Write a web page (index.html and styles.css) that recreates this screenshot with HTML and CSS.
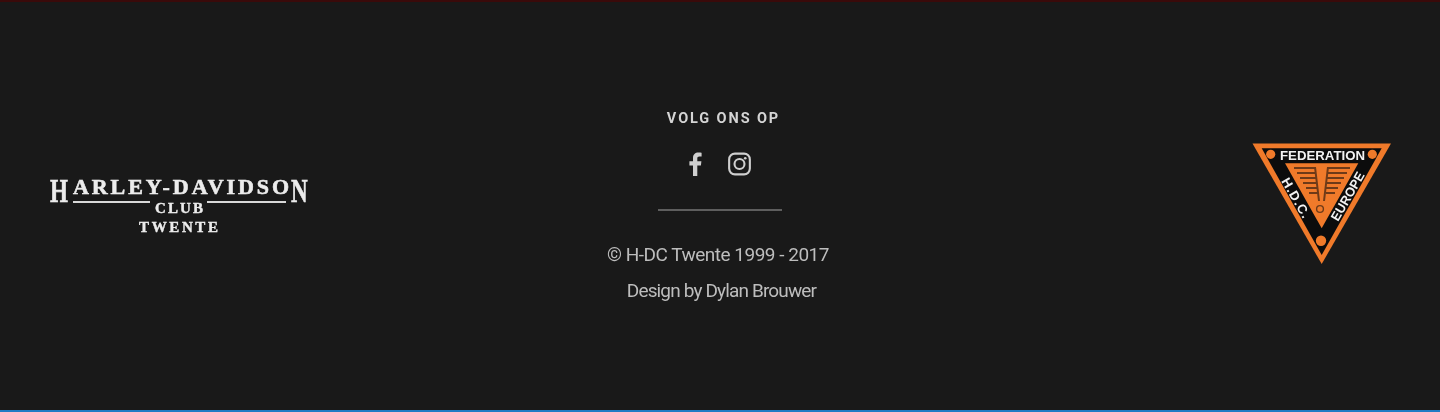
FILE: index.html
```html
<!DOCTYPE html>
<html>
<head>
    <title>H-DC Twente</title>
    <link rel="stylesheet" href="styles.css">
</head>
<body>
    <footer class="footer">
        <a class="logo-club" href="#">
            <svg width="262" height="68" viewBox="0 -6 262 68">
                <text class="club-big" transform="translate(2 27) scale(0.68 1)">H</text>
                <text class="club-name" x="25" y="19" textLength="216" lengthAdjust="spacing">ARLEY-DAVIDSO</text>
                <text class="club-big" transform="translate(243 27) scale(0.68 1)">N</text>
                <rect class="club-line" x="25" y="26" width="77" height="2"></rect>
                <rect class="club-line" x="159" y="26" width="79" height="2"></rect>
                <text class="club-sub" x="107" y="38" textLength="48" lengthAdjust="spacing">CLUB</text>
                <text class="club-sub" x="91" y="57" textLength="79" lengthAdjust="spacing">TWENTE</text>
            </svg>
        </a>

        <div class="follow">
            <h4 class="follow-title">VOLG ONS OP</h4>
            <div class="social">
                <a href="#" class="social-link">
                    <svg width="16" height="24" viewBox="0 0 16 24">
                        <path class="icon-fill" d="M5 24V13.4H1.4V9.2H5V6.1C5 2.5 7.2.6 10.4.6c1.5 0 2.8.1 3.2.2v3.7h-2.2c-1.7 0-2.1.8-2.1 2v2.7h4.1l-.5 4.2H9.3V24z"></path>
                    </svg>
                </a>
                <a href="#" class="social-link">
                    <svg width="23" height="24" viewBox="0 0 24 25">
                        <rect class="icon-line" x="1.2" y="1.7" width="21.6" height="21.6" rx="6"></rect>
                        <circle class="icon-line" cx="12" cy="12.5" r="5.2"></circle>
                        <circle class="icon-fill" cx="18" cy="6.5" r="1.4"></circle>
                    </svg>
                </a>
            </div>
            <hr class="divider">
            <p class="credit credit-copy">© H-DC Twente 1999 - 2017</p>
            <p class="credit credit-design">Design by Dylan Brouwer</p>
        </div>

        <a class="logo-fed" href="#">
            <svg width="140" height="122" viewBox="0 0 140 122">
                <polygon class="fed-orange" points="0.5,0.5 139,0.5 69.7,121"></polygon>
                <polygon class="fed-black" points="9.7,5.3 129.7,5.3 69.7,112"></polygon>
                <polygon class="fed-orange" points="33,20.3 106.3,20.3 69.7,85.3"></polygon>
                <circle class="fed-orange" cx="18.7" cy="11.3" r="4.6"></circle>
                <circle class="fed-orange" cx="120.3" cy="11.3" r="4.6"></circle>
                <circle class="fed-orange" cx="69" cy="97.7" r="5.2"></circle>
                <text class="fed-text" x="70.5" y="16.5" text-anchor="middle" textLength="85" lengthAdjust="spacingAndGlyphs">FEDERATION</text>
                <text class="fed-text" transform="translate(29 38) rotate(60)" textLength="44" lengthAdjust="spacing">H.D.C.</text>
                <text class="fed-text" transform="translate(86 79) rotate(-60)" textLength="54" lengthAdjust="spacingAndGlyphs">EUROPE</text>
                <path class="fed-stripes" d="M42 25H63M45 30H64M48 35H64M51 40H65M54 45H65M57 50H66M76 25H98M76 30H95M75 35H92M75 40H89M74 45H86M74 50H83"></path>
                <path class="fed-stripes" d="M63 24L67 58M76 24L72 58"></path>
                <circle class="fed-ring" cx="68" cy="66" r="3.4"></circle>
            </svg>
        </a>
    </footer>
</body>
</html>
```

FILE: styles.css
```css
html, body {
    margin: 0;
    padding: 0;
}

body {
    background-color: #191919;
}

.footer {
    box-sizing: border-box;
    height: 412px;
    display: grid;
    grid-template-columns: 1fr auto 1fr;
    align-items: center;
    padding: 0 48px;
    background-color: #191919;
    border-top: 2px solid #3a0a0a;
    border-bottom: 2px solid #1f7cc4;
}

.logo-club {
    justify-self: start;
    display: block;
    height: 68px;
    margin-top: -6px;
    filter: blur(0.4px);
}

.logo-fed {
    justify-self: end;
    display: block;
    height: 122px;
    margin-top: -4px;
    filter: blur(0.6px);
}

.club-name,
.club-big,
.club-sub {
    font-family: "Liberation Serif", serif;
    font-weight: bold;
    fill: #ececec;
    stroke: #ececec;
    stroke-width: 0.6;
}

.club-name {
    font-size: 22px;
}

.club-big {
    font-size: 34px;
}

.club-sub {
    font-size: 15px;
    stroke-width: 0.4;
}

.club-line {
    fill: #d8d8d8;
}

.fed-orange {
    fill: #f07a2a;
}

.fed-black {
    fill: #0c0c0c;
}

.fed-text {
    font-family: "Liberation Sans", sans-serif;
    font-weight: bold;
    font-size: 13px;
    fill: #f2f2f2;
}

.fed-stripes {
    fill: none;
    stroke: #6e3a18;
    stroke-width: 2;
}

.fed-ring {
    fill: none;
    stroke: #6e3a18;
    stroke-width: 1.4;
}

.follow {
    width: 240px;
    display: flex;
    flex-direction: column;
    align-items: center;
    color: #c8c8c8;
    font-family: Roboto, sans-serif;
    filter: blur(0.3px);
}

.follow-title {
    margin: -2px 0 0 7px;
    font-size: 14.5px;
    line-height: 18px;
    font-weight: 700;
    letter-spacing: 1.9px;
    color: #d4d4d4;
}

.social {
    display: flex;
    align-items: center;
    gap: 24px;
    margin: 24px 0 0 -2px;
}

.social-link {
    display: block;
    height: 24px;
}

.icon-fill {
    fill: #cfcfcf;
}

.icon-line {
    fill: none;
    stroke: #cfcfcf;
    stroke-width: 2.2;
}

.divider {
    width: 124px;
    height: 2px;
    margin: 33px 0;
    border: 0;
    background-color: #5e5e5e;
}

.credit {
    margin: 0;
    font-size: 19px;
    line-height: 21px;
    white-space: nowrap;
    color: #bdbdbd;
}

.credit-copy {
    margin: 0 4px 15px 0;
    letter-spacing: -0.5px;
}

.credit-design {
    margin-left: 3px;
    letter-spacing: -0.85px;
}
```
